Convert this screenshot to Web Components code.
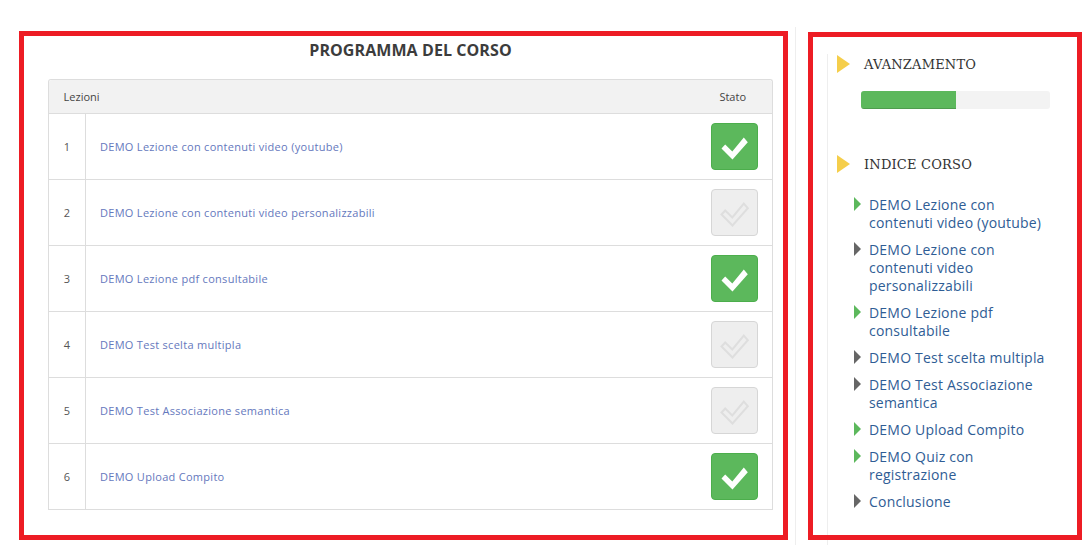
<!DOCTYPE html>
<html><head><meta charset="utf-8"><style>
html,body{margin:0;padding:0;background:#fff;}
body{width:1091px;height:545px;overflow:hidden;font-family:"Open Sans",sans-serif;}
app-page{display:flex;}
</style></head><body>
<app-page>
<course-table slot="main" title-text="PROGRAMMA DEL CORSO">
  <lesson-row n="1" done>DEMO Lezione con contenuti video (youtube)</lesson-row>
  <lesson-row n="2">DEMO Lezione con contenuti video personalizzabili</lesson-row>
  <lesson-row n="3" done>DEMO Lezione pdf consultabile</lesson-row>
  <lesson-row n="4">DEMO Test scelta multipla</lesson-row>
  <lesson-row n="5">DEMO Test Associazione semantica</lesson-row>
  <lesson-row n="6" done>DEMO Upload Compito</lesson-row>
</course-table>
<course-side slot="side">
  <side-heading>AVANZAMENTO</side-heading>
  <progress-bar value="50.3"></progress-bar>
  <side-heading class="second">INDICE CORSO</side-heading>
  <index-list>
    <index-item done>DEMO Lezione con contenuti video (youtube)</index-item>
    <index-item>DEMO Lezione con contenuti video personalizzabili</index-item>
    <index-item done>DEMO Lezione pdf consultabile</index-item>
    <index-item>DEMO Test scelta multipla</index-item>
    <index-item>DEMO Test Associazione semantica</index-item>
    <index-item done>DEMO Upload Compito</index-item>
    <index-item done>DEMO Quiz con registrazione</index-item>
    <index-item>Conclusione</index-item>
  </index-list>
</course-side>
</app-page>
<script>
function def(name, css, html){
  customElements.define(name, class extends HTMLElement{
    connectedCallback(){
      if(this.shadowRoot) return;
      const r=this.attachShadow({mode:'open'});
      r.innerHTML='<style>'+css+'</style>'+(typeof html==='function'?html(this):html);
    }
  });
}
def('app-page',`:host{display:flex;width:1091px;height:545px;box-sizing:border-box;padding:31px 0 0 19px;align-items:flex-start;position:relative}
 .rule{position:absolute;left:795px;top:27px;bottom:0;width:1px;background:#eee}`,
 `<div class="rule"></div><slot name="main"></slot><slot name="side"></slot>`);
def('course-table',`:host{display:block;box-sizing:border-box;width:769px;height:509px;border:5px solid #ed1c24;padding:0 9px 0 24px;background:#fff;position:relative}
 h2{margin:0;height:43px;font:700 16px/28px "Open Sans",sans-serif;letter-spacing:.08px;color:#3c3c3c;text-align:center;padding-right:1px}
 .t{box-sizing:border-box;border:1px solid #ddd;border-bottom:0;border-radius:3px 3px 0 0;width:725px}
 .h{display:flex;justify-content:space-between;align-items:center;height:33px;background:#f2f2f2;border-bottom:1px solid #ddd;font-size:11px;color:#444;padding:0 26px 0 14.6px;border-radius:3px 3px 0 0}`,
 el=>`<h2>${el.getAttribute('title-text')}</h2><div class="t"><div class="h"><span>Lezioni</span><span>Stato</span></div><slot></slot></div>`);
const CHECK='M1.5 13.5 L5.2 9.5 L12.3 16.5 L23.8 2.5 L27.8 7.2 L12.5 24.5 Z';
def('lesson-row',`:host{display:flex;height:66px;box-sizing:border-box;border-bottom:1px solid #ddd;font-size:11px;align-items:stretch}
 .n{width:37px;box-sizing:border-box;border-right:1px solid #ddd;display:flex;align-items:center;justify-content:center;color:#555}
 .l{flex:1;display:flex;align-items:center;padding-left:14px;color:#6578bd;letter-spacing:.29px}
 .b{width:47px;height:47px;box-sizing:border-box;border-radius:4px;margin:9px 14px 0 0;display:flex;align-items:center;justify-content:center}
 .on{background:#5cb85c;border:1px solid #4cae4c}
 .off{background:#eee;border:1px solid #d6d6d6}
 svg{display:block;overflow:visible}`,
 el=>{const on=el.hasAttribute('done');
 return `<div class="n">${el.getAttribute('n')}</div><div class="l"><slot></slot></div><div class="b ${on?'on':'off'}"><svg width="30" height="24" viewBox="0 0 30 24">${
  on?`<path d="${CHECK}" fill="#fff"/>`
    :`<path d="${CHECK}" fill="none" stroke="#dedede" stroke-width="2"/>`
 }</svg></div>`});
def('course-side',`:host{display:block;box-sizing:border-box;width:274px;height:508px;margin:1px 0 0 20px;padding:20px 0 0 19px;position:relative}
 :host::after{content:"";position:absolute;inset:0;border:5px solid #ed1c24;pointer-events:none}
 .w{border-left:1px solid #eee;height:500px;padding-left:9px;box-sizing:border-box}`,
 `<div class="w"><slot></slot></div>`);
def('side-heading',`:host{display:flex;align-items:center;height:20px;margin-top:2px;font:13px/20px "DejaVu Serif",serif;letter-spacing:.2px;color:#333;gap:14px}
 :host(.second){margin-top:45px}
 span{padding-top:2px}
 i{display:block;width:0;height:0;border-left:13px solid #f5ce4b;border-top:9px solid transparent;border-bottom:9px solid transparent}`,
 `<i></i><span><slot></slot></span>`);
def('progress-bar',`:host{display:block;margin:17px 0 0 24px;width:189px;height:18px;background:#f3f3f3;border-radius:3px;overflow:hidden}
 div{height:100%;background:#5cb85c;box-shadow:inset 0 -1px 0 rgba(0,0,0,.15)}`,
 el=>`<div style="width:${el.getAttribute('value')}%"></div>`);
def('index-list',`:host{display:flex;flex-direction:column;gap:9px;padding:22px 0 0 17px}`,`<slot></slot>`);
def('index-item',`:host{display:flex;font:14px/18px "Open Sans",sans-serif;letter-spacing:.2px;color:#2f5d95;width:192px}
 i{flex:none;width:0;height:0;margin:1px 8px 0 0;border-left:7px solid #666;border-top:7px solid transparent;border-bottom:7px solid transparent}
 :host([done]) i{border-left-color:#5cb85c}`,
 `<i></i><span><slot></slot></span>`);
</script>
</body></html>
